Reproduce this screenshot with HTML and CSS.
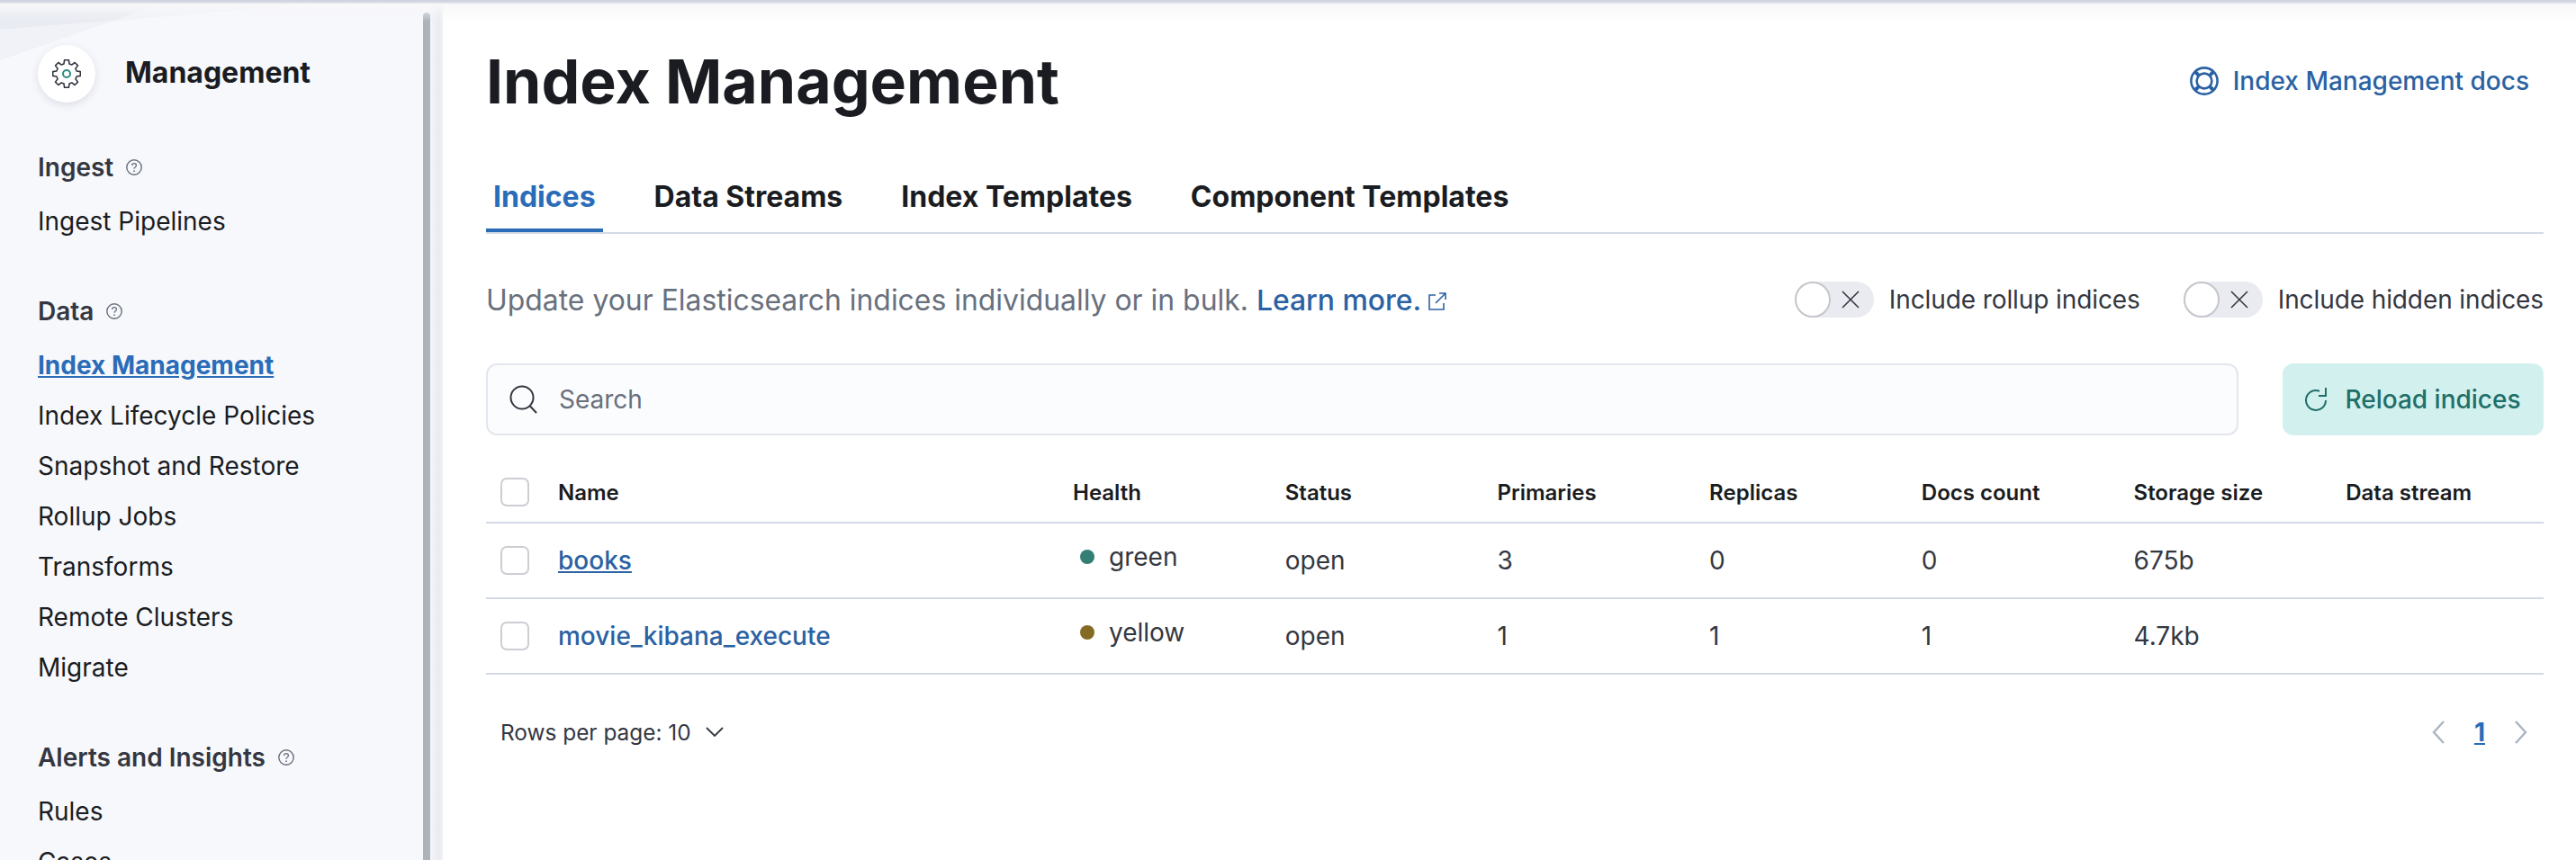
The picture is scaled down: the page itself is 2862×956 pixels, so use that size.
FILE: index.html
```html
<!DOCTYPE html>
<html lang="en">
<head>
  <meta charset="UTF-8">
  <title>Index Management</title>
  <link rel="stylesheet" href="styles.css">
</head>
<body>
  <aside class="sidebar">
    <svg class="wedge" width="480" height="70" viewBox="0 0 480 70">
      <polygon points="0,0 180,3 127,23 0,33" fill="#e9ebf2"/>
      <polygon points="0,33 127,23 0,67" fill="#f0f2f7"/>
      <polygon points="127,23 180,3 360,3" fill="#f0f2f7"/>
    </svg>
    <div class="scrollbar"></div>

    <div class="side-head">
      <span class="side-logo">
        <svg width="32" height="32" viewBox="0 0 32 32" fill="none">
          <polygon stroke="#343741" stroke-width="1.6" stroke-linejoin="round" points="27.1,13 31.3,13.6 31.3,18.4 27.1,19 25.95,21.74 28.5,25.12 25.12,28.5 21.74,25.95 19,27.1 18.4,31.3 13.6,31.3 13,27.1 10.26,25.95 6.88,28.5 3.5,25.12 6.05,21.74 4.9,19 .7,18.4 .7,13.6 4.9,13 6.05,10.26 3.5,6.88 6.88,3.5 10.26,6.05 13,4.9 13.6,.7 18.4,.7 19,4.9 21.74,6.05 25.12,3.5 28.5,6.88 25.95,10.26"/>
          <circle cx="16" cy="16" r="4" stroke="#2d8a80" stroke-width="2"/>
        </svg>
      </span>
      <span class="side-title">Management</span>
    </div>

    <nav class="side-nav">
      <section class="side-group">
        <h3>Ingest
          <svg class="help" viewBox="0 0 18 18" fill="none"><circle cx="9" cy="9" r="8.2" stroke="#69707d" stroke-width="1.4"/><path d="M6.6 7c0-1.4 1-2.3 2.4-2.3s2.4.9 2.4 2.2c0 1.9-2.4 1.8-2.4 3.8" stroke="#69707d" stroke-width="1.3"/><circle cx="9" cy="13.2" r=".9" fill="#69707d"/></svg>
        </h3>
        <a>Ingest Pipelines</a>
      </section>
      <section class="side-group">
        <h3>Data
          <svg class="help" viewBox="0 0 18 18" fill="none"><circle cx="9" cy="9" r="8.2" stroke="#69707d" stroke-width="1.4"/><path d="M6.6 7c0-1.4 1-2.3 2.4-2.3s2.4.9 2.4 2.2c0 1.9-2.4 1.8-2.4 3.8" stroke="#69707d" stroke-width="1.3"/><circle cx="9" cy="13.2" r=".9" fill="#69707d"/></svg>
        </h3>
        <a class="current">Index Management</a>
        <a>Index Lifecycle Policies</a>
        <a>Snapshot and Restore</a>
        <a>Rollup Jobs</a>
        <a>Transforms</a>
        <a>Remote Clusters</a>
        <a>Migrate</a>
      </section>
      <section class="side-group">
        <h3>Alerts and Insights
          <svg class="help" viewBox="0 0 18 18" fill="none"><circle cx="9" cy="9" r="8.2" stroke="#69707d" stroke-width="1.4"/><path d="M6.6 7c0-1.4 1-2.3 2.4-2.3s2.4.9 2.4 2.2c0 1.9-2.4 1.8-2.4 3.8" stroke="#69707d" stroke-width="1.3"/><circle cx="9" cy="13.2" r=".9" fill="#69707d"/></svg>
        </h3>
        <a>Rules</a>
        <a>Cases</a>
      </section>
    </nav>
  </aside>

  <main class="content">
    <header class="page-head">
      <h1>Index Management</h1>
      <a class="docs-link">
        <svg width="32" height="32" viewBox="0 0 32 32" fill="none" stroke="#2b62a3" stroke-width="2.6">
          <circle cx="16" cy="16" r="14.6"/>
          <circle cx="16" cy="16" r="8.4"/>
          <path d="M6 6l4.2 4.2M26 6l-4.2 4.2M6 26l4.2-4.2M26 26l-4.2-4.2" stroke-width="4"/>
        </svg>
        Index Management docs
      </a>
    </header>

    <div class="tabs">
      <a class="tab active">Indices</a>
      <a class="tab">Data Streams</a>
      <a class="tab">Index Templates</a>
      <a class="tab">Component Templates</a>
    </div>

    <div class="intro">
      <p>Update your Elasticsearch indices individually or in bulk. <a>Learn more.
        <svg width="20" height="20" viewBox="0 0 20 20" fill="none" stroke="#2b62a3" stroke-width="1.6"><path d="M8 3H1v16h16v-7M12 1h7v7M19 1L8 12"/></svg></a></p>
      <div class="switches">
        <label class="switch"><span class="track"><span class="knob"></span><svg width="20" height="20" viewBox="0 0 20 20" stroke="#343741" stroke-width="1.6"><path d="M1 1l18 18M19 1L1 19"/></svg></span>Include rollup indices</label>
        <label class="switch"><span class="track"><span class="knob"></span><svg width="20" height="20" viewBox="0 0 20 20" stroke="#343741" stroke-width="1.6"><path d="M1 1l18 18M19 1L1 19"/></svg></span>Include hidden indices</label>
      </div>
    </div>

    <div class="toolbar">
      <div class="search">
        <svg width="32" height="32" viewBox="0 0 32 32" fill="none" stroke="#343741" stroke-width="2"><circle cx="14" cy="14" r="12.5"/><path d="M23 23.5l7 7.5"/></svg>
        <span>Search</span>
      </div>
      <button class="reload">
        <svg width="24" height="26" viewBox="0 0 24 26" fill="none" stroke="#1f6f69" stroke-width="2"><path d="M16 3.7A11 11 0 1 0 23 14"/><path d="M23 0v9h-8"/></svg>
        Reload indices
      </button>
    </div>

    <table class="indices">
      <thead>
        <tr>
          <th class="check"><span class="box"></span></th>
          <th class="name">Name</th>
          <th>Health</th>
          <th>Status</th>
          <th>Primaries</th>
          <th>Replicas</th>
          <th>Docs count</th>
          <th>Storage size</th>
          <th>Data stream</th>
        </tr>
      </thead>
      <tbody>
        <tr>
          <td class="check"><span class="box"></span></td>
          <td><a class="index-link under">books</a></td>
          <td><span class="health"><i class="dot green"></i>green</span></td>
          <td>open</td>
          <td>3</td>
          <td>0</td>
          <td>0</td>
          <td>675b</td>
          <td></td>
        </tr>
        <tr>
          <td class="check"><span class="box"></span></td>
          <td><a class="index-link">movie_kibana_execute</a></td>
          <td><span class="health"><i class="dot yellow"></i>yellow</span></td>
          <td>open</td>
          <td>1</td>
          <td>1</td>
          <td>1</td>
          <td>4.7kb</td>
          <td></td>
        </tr>
      </tbody>
    </table>

    <div class="table-foot">
      <span class="per-page">Rows per page: 10
        <svg width="20" height="12" viewBox="0 0 20 12" fill="none" stroke="#343741" stroke-width="1.8"><path d="M1 1l9 9 9-9"/></svg>
      </span>
      <span class="pager">
        <svg width="14" height="26" viewBox="0 0 14 26" fill="none" stroke="#abb4c4" stroke-width="2.4"><path d="M13 1L2 13l11 12"/></svg>
        <a>1</a>
        <svg width="14" height="26" viewBox="0 0 14 26" fill="none" stroke="#abb4c4" stroke-width="2.4"><path d="M1 1l11 12L1 25"/></svg>
      </span>
    </div>
  </main>
</body>
</html>
```

FILE: styles.css
```css
* {
  box-sizing: border-box;
}

html, body {
  margin: 0;
  height: 956px;
  overflow: hidden;
}

body {
  display: flex;
  font-family: Inter, "Noto Sans", sans-serif;
  font-size: 28px;
  color: #343741;
  background: #fff;
}

/* shadow under the page header, which is cut off above the shot */
body::before {
  content: "";
  position: fixed;
  top: 0;
  left: 0;
  right: 0;
  height: 24px;
  background: linear-gradient(#ccd1dd 0, #d8dce6 3px, #f7f7f9 4px, rgba(255,255,255,0) 100%);
  z-index: 5;
}

/* sidebar */
.sidebar {
  position: relative;
  flex: 0 0 492px;
  height: 956px;
  overflow: hidden;
  padding: 50px 0 0 42px;
  background: linear-gradient(to right, #f7f8fc 478px, #eef0f5 482px, #e9ebf0 488px, #f1f2f6 492px);
}

.wedge {
  position: absolute;
  top: 0;
  left: 0;
}

.scrollbar {
  position: absolute;
  top: 14px;
  left: 470px;
  bottom: 0;
  width: 8px;
  background: #adb2bb;
  border-radius: 4px 4px 0 0;
}

.side-head {
  position: relative;
  display: flex;
  align-items: center;
  gap: 33px;
}

.side-logo {
  display: flex;
  align-items: center;
  justify-content: center;
  width: 64px;
  height: 64px;
  border-radius: 50%;
  background: #fff;
  box-shadow: 0 3px 10px rgba(60,70,100,0.14);
}

.side-title {
  font-size: 32px;
  font-weight: 700;
  color: #1a1c21;
  margin-top: -4px;
}

.side-nav {
  position: relative;
  margin-top: 52px;
}

.side-group {
  margin-bottom: 52px;
}

.side-group h3 {
  display: flex;
  align-items: center;
  gap: 14px;
  margin: 0 0 12px;
  height: 40px;
  font-size: 28px;
  font-weight: 600;
  color: #343741;
}

.help {
  width: 18px;
  height: 18px;
}

.side-group a {
  display: block;
  height: 56px;
  line-height: 56px;
  color: #1a1c21;
}

.side-group a.current {
  color: #2b6cb8;
  font-weight: 700;
  text-decoration: underline;
}

/* main column */
.content {
  flex: 1;
  padding: 0 36px 0 48px;
}

.page-head {
  display: flex;
  align-items: center;
  justify-content: space-between;
  height: 180px;
  padding-right: 16px;
}

h1 {
  margin: 0;
  font-size: 68px;
  font-weight: 700;
  color: #1a1c21;
}

.docs-link {
  display: flex;
  align-items: center;
  gap: 16px;
  font-weight: 500;
  color: #2b62a3;
}

.tabs {
  display: flex;
  gap: 49px;
  height: 80px;
  border-bottom: 2px solid #d3dae6;
}

.tab {
  padding: 0 8px;
  line-height: 78px;
  font-size: 32px;
  font-weight: 700;
  color: #1a1c21;
}

.tab.active {
  height: 78px;
  color: #2b6cb8;
  border-bottom: 4px solid #2b6cb8;
}

.intro {
  display: flex;
  align-items: center;
  justify-content: space-between;
  height: 144px;
  padding-top: 2px;
}

.intro p {
  margin: 0;
  font-size: 31.9px;
  color: #69707d;
}

.intro p a {
  color: #2b62a3;
  font-weight: 500;
}

.switches {
  display: flex;
  gap: 48px;
  letter-spacing: -0.1px;
}

.switch {
  display: flex;
  align-items: center;
  gap: 17px;
}

.track {
  display: flex;
  align-items: center;
  justify-content: flex-end;
  position: relative;
  width: 88px;
  height: 40px;
  padding-right: 16px;
  border-radius: 20px;
  background: #e9ebf0;
}

.knob {
  position: absolute;
  top: 0;
  left: 0;
  width: 40px;
  height: 40px;
  border-radius: 50%;
  background: #fff;
  border: 2px solid #c4c6cc;
}

.toolbar {
  display: flex;
  gap: 49px;
}

.search {
  flex: 1;
  display: flex;
  align-items: center;
  gap: 23px;
  height: 80px;
  padding-left: 24px;
  background: #fbfcfd;
  border: 2px solid #e3e6ef;
  border-radius: 12px;
  color: #69707d;
}

.reload {
  display: flex;
  align-items: center;
  justify-content: center;
  gap: 20px;
  width: 290px;
  height: 80px;
  border: 0;
  border-radius: 12px;
  background: #d2f0ee;
  font: 500 28px Inter, sans-serif;
  color: #1f6f69;
}

/* table */
.indices {
  width: 100%;
  margin-top: 16px;
  border-collapse: collapse;
  table-layout: fixed;
}

.indices th {
  height: 81px;
  padding: 14px 16px 0;
  font-size: 24px;
  font-weight: 600;
  text-align: left;
  color: #1a1c21;
  border-bottom: 2px solid #d3dae6;
}

.indices th.check, .indices td.check {
  width: 64px;
}

.indices th.name {
  width: 572px;
}

.indices td {
  height: 84px;
  padding: 0 16px;
  border-bottom: 2px solid #d3dae6;
}

.box {
  display: block;
  width: 32px;
  height: 32px;
  background: #fff;
  border: 2px solid #ccced3;
  border-radius: 7px;
}

.index-link {
  color: #2b62a3;
  font-weight: 500;
}

.index-link.under {
  text-decoration: underline;
}

.health {
  display: flex;
  align-items: center;
  gap: 16px;
  margin-top: -8px;
  padding-left: 8px;
}

.dot {
  width: 16px;
  height: 16px;
  border-radius: 50%;
}

.dot.green {
  background: #347e74;
}

.dot.yellow {
  background: #856a24;
}

.table-foot {
  display: flex;
  align-items: center;
  justify-content: space-between;
  height: 128px;
  padding: 0 18px 0 16px;
}

.per-page {
  display: flex;
  align-items: center;
  gap: 16px;
  font-size: 24.4px;
}

.pager {
  display: flex;
  align-items: center;
  gap: 33px;
}

.pager a {
  color: #2b6cb8;
  font-weight: 700;
  text-decoration: underline;
}
```
